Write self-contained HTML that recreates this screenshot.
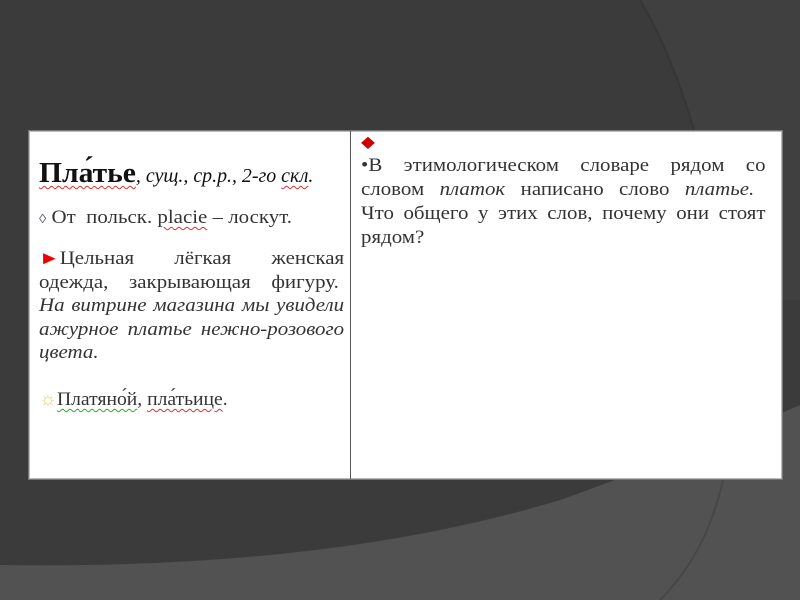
<!DOCTYPE html>
<html><head><meta charset="utf-8"><style>
body{margin:0;width:800px;height:600px;overflow:hidden;background:#3b3b3b;position:relative;font-family:"Liberation Serif","DejaVu Serif",serif;}
svg.bg{position:absolute;left:0;top:0}
.tbl{position:absolute;left:28px;top:130px;width:753px;height:348px;background:#fff;border:1px solid #777;box-shadow:0 0 0 1px #bbb inset}
.div{position:absolute;left:321px;top:0;width:1px;height:100%;background:#555}
.l{position:absolute;white-space:nowrap;color:#333;font-size:18.5px;line-height:20px;transform:scaleX(1.13);transform-origin:0 0}
.j{text-align:justify;text-align-last:justify;white-space:normal}
i{font-style:italic}
.sq{text-decoration:underline wavy #d33;text-decoration-thickness:1px;text-underline-offset:3px}
.sg{text-decoration:underline wavy #3a3;text-decoration-thickness:1px;text-underline-offset:3px}
</style></head><body>
<svg class="bg" width="800" height="600">
<path d="M640 0 Q700 100 730 300 L800 300 L800 0Z" fill="#404040"/>
<path d="M640 0 Q700 100 730 300" stroke="#363636" stroke-width="2" fill="none"/>
<path d="M0 565 Q330 570 560 500 Q700 450 800 405 L800 600 L0 600Z" fill="#525252"/>
<path d="M725 470 Q710 550 660 600" stroke="#474747" stroke-width="2" fill="none"/>
</svg>
<div class="tbl">
<div class="div"></div>
<div class="l" style="left:10px;top:27px;font-size:29px;line-height:30px;color:#111;transform:scaleX(1.02)"><b class="sq">Пла́тье</b><i style="font-size:19.5px">, сущ., ср.р., 2-го <span class="sq">скл</span>.</i></div>
<div class="l" style="left:10px;top:77px"><span style="font-size:13px;color:#557">◊</span> От&nbsp; польск. <span class="sq">placie</span> – лоскут.</div>
<div class="l j" style="left:10px;top:118px;width:270px"><span style="color:#e00">►</span>Цельная лёгкая женская</div>
<div class="l j" style="left:10px;top:142px;width:270px">одежда, закрывающая фигуру.&nbsp;</div>
<div class="l j" style="left:10px;top:165px;width:270px"><i>На витрине магазина мы увидели</i></div>
<div class="l j" style="left:10px;top:189px;width:270px"><i>ажурное платье нежно-розового</i></div>
<div class="l" style="left:10px;top:212px"><i>цвета.</i></div>
<div class="l" style="left:10px;top:259px;transform:scaleX(1.06)"><span style="color:#e8d060">☼</span><span class="sg">Платяно́й</span>, <span class="sq">пла́тьице</span>.</div>
<div class="l" style="left:332px;top:2px;color:#c00;font-size:16px">◆</div>
<div class="l j" style="left:332px;top:25px;width:358px">•В этимологическом словаре рядом со</div>
<div class="l j" style="left:332px;top:49px;width:348px">словом <i>платок</i> написано слово <i>платье.</i></div>
<div class="l j" style="left:332px;top:73px;width:358px">Что общего у этих слов, почему они стоят</div>
<div class="l" style="left:332px;top:97px">рядом?</div>
</div>
</body></html>
